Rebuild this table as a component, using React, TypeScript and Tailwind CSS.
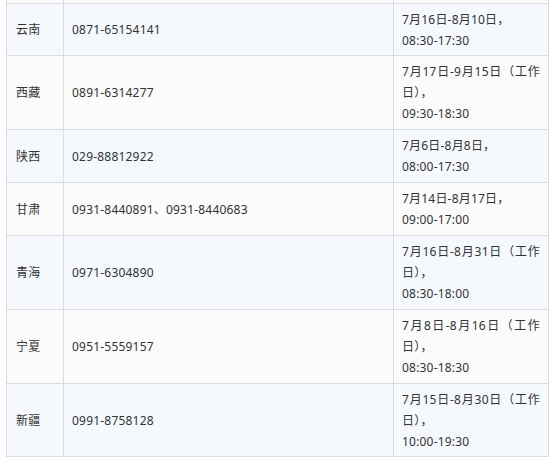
const rows = [
  { name: "云南", tel: "0871-65154141", date: "7月16日-8月10日，", time: "08:30-17:30" },
  { name: "西藏", tel: "0891-6314277", date: "7月17日-9月15日（工作日），", time: "09:30-18:30" },
  { name: "陕西", tel: "029-88812922", date: "7月6日-8月8日，", time: "08:00-17:30" },
  { name: "甘肃", tel: "0931-8440891、0931-8440683", date: "7月14日-8月17日，", time: "09:00-17:00" },
  { name: "青海", tel: "0971-6304890", date: "7月16日-8月31日（工作日），", time: "08:30-18:00" },
  { name: "宁夏", tel: "0951-5559157", date: "7月8日-8月16日（工作日），", time: "08:30-18:30" },
  { name: "新疆", tel: "0991-8758128", date: "7月15日-8月30日（工作日），", time: "10:00-19:30" },
];

const cell = "border border-[#dcdcdc] pr-[8px] pt-[5px] pb-[4.85px] align-middle";

export default function App() {
  return (
    <div className="w-[553px] h-[461px] overflow-hidden bg-white font-['Noto_Sans','Noto_Sans_CJK_SC',sans-serif] text-[12px] leading-[21px] tracking-[0.2px] text-[#333]">
      <table className="ml-[6px] w-[542px] table-fixed border-collapse">
        <colgroup>
          <col className="w-[57px]" />
          <col className="w-[330px]" />
          <col className="w-[155px]" />
        </colgroup>
        <tbody>
          <tr className="bg-[#fbfbfb]">
            <td className="h-[3px] p-0 border-x border-[#dcdcdc]" />
            <td className="h-[3px] p-0 border-x border-[#dcdcdc]" />
            <td className="h-[3px] p-0 border-x border-[#dcdcdc]" />
          </tr>
          {rows.map((r, i) => (
            <tr key={r.name} className={i % 2 === 0 ? "bg-[#f5f9fe]" : "bg-[#fbfbfb]"}>
              <td className={cell + " pl-[9px]"}>{r.name}</td>
              <td className={cell + " pl-[8px]"}>{r.tel}</td>
              <td className={cell + " pl-[8px] text-justify"}>
                {r.date}
                <br />
                {r.time}
              </td>
            </tr>
          ))}
        </tbody>
      </table>
    </div>
  );
}
